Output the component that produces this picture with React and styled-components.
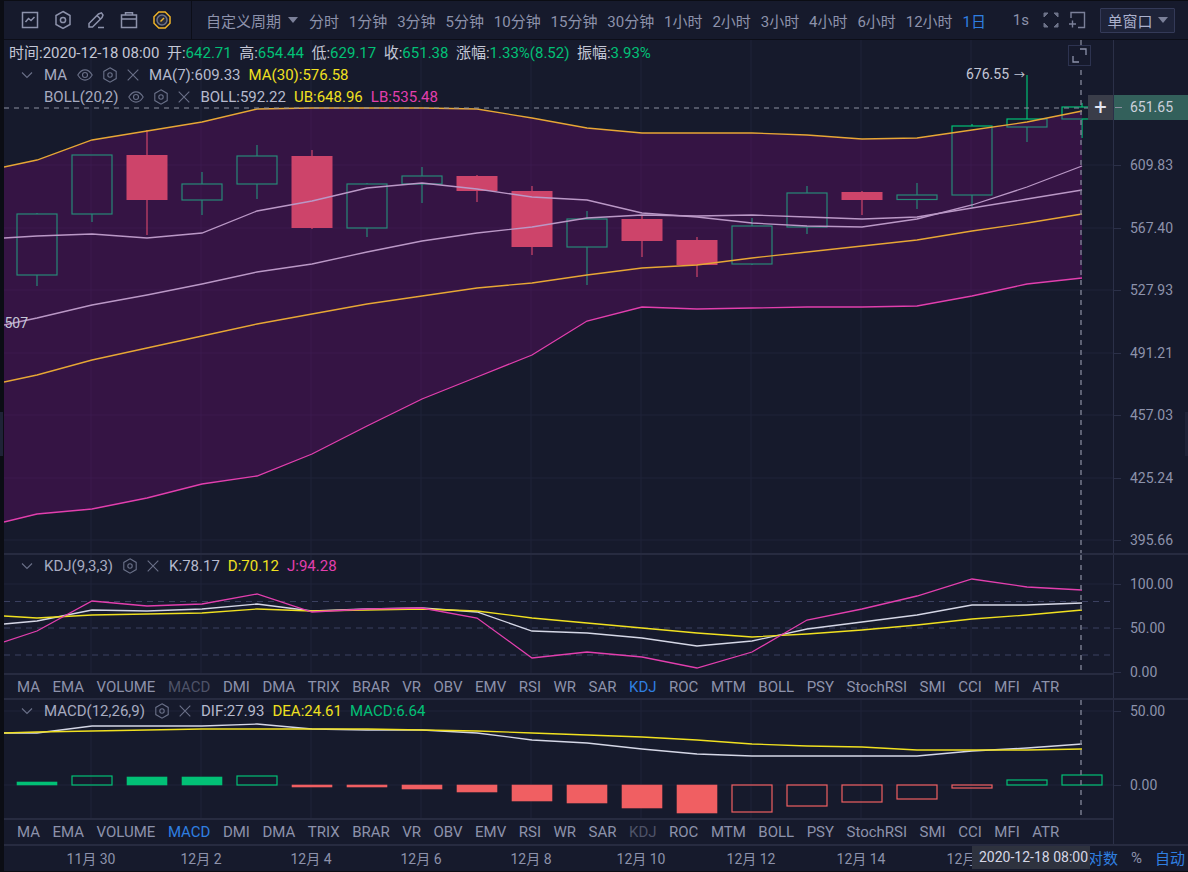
import React from 'react';
import styled, { createGlobalStyle } from 'styled-components';

const periods = ['分时', '1分钟', '3分钟', '5分钟', '10分钟', '15分钟', '30分钟', '1小时', '2小时', '3小时', '4小时', '6小时', '12小时'];
const indicators = ['MA', 'EMA', 'VOLUME', 'MACD', 'DMI', 'DMA', 'TRIX', 'BRAR', 'VR', 'OBV', 'EMV', 'RSI', 'WR', 'SAR', 'KDJ', 'ROC', 'MTM', 'BOLL', 'PSY', 'StochRSI', 'SMI', 'CCI', 'MFI', 'ATR'];
const dates = ['11月 30', '12月 2', '12月 4', '12月 6', '12月 8', '12月 10', '12月 12', '12月 14', '12月 16'];

const GREEN = '#02c076';
const RED = '#f05f62';
const WHITE = '#d5d7e6';
const LABEL = '#b7bace';
const YELLOW = '#f0e020';
const PINK = '#e23fae';
const ORANGE = '#e7a735';
const GRID = '#1f2338';

// candle: [high, top of body, bottom of body, low, up?]
const candles = [
  [213, 214, 275, 286, 1], [155, 155, 214, 222, 1], [130, 155, 200, 235, 0], [172, 184, 200, 215, 1],
  [145, 156, 184, 199, 1], [150, 156, 228, 229, 0], [183, 184, 228, 237, 1], [167, 176, 184, 203, 1],
  [175, 176, 191, 202, 0], [186, 191, 247, 255, 0], [211, 219, 247, 285, 1], [216, 219, 241, 257, 0],
  [237, 240, 265, 277, 0], [218, 226, 264, 265, 1], [186, 193, 227, 234, 1], [191, 192, 200, 215, 0],
  [183, 195, 199.5, 209, 1], [124, 126, 195, 207, 1], [75, 119, 127, 142, 1], [103, 107, 119, 138, 1],
];

const upper = [167, 160, 140, 131, 122, 109, 108, 108, 108, 109, 118, 128, 133, 133, 133, 135, 139, 138, 130, 122, 111];
const lower = [522, 514, 509, 498, 484, 476, 454, 426, 399, 377, 355, 321, 307, 309, 308, 307, 307, 306, 296, 284, 278];
const middle = [382, 375, 360, 348, 336, 324, 314, 304, 296, 288, 283, 275, 268, 265, 258, 252, 246, 240, 231, 223, 214];
const ma7 = [238, 236, 234, 238, 233, 211, 201, 188, 183, 189, 197, 200, 213, 217, 223, 226, 227, 219, 205, 187, 166];
const ma30 = [325, 318, 305, 295, 284, 272, 264, 252, 241, 233, 227, 218, 215, 216, 215, 217, 219, 217, 208, 199, 190];

const kdjK = [624, 621, 610, 611, 609, 604, 611, 609, 608, 612, 631, 633, 638, 646, 641, 629, 622, 615, 605, 605, 603];
const kdjD = [616, 618, 615, 614, 613, 609, 611, 610, 609, 611, 618, 623, 628, 633, 637, 634, 630, 625, 619, 615, 610];
const kdjJ = [642, 631, 601, 606, 604, 594, 612, 609, 608, 618, 658, 652, 657, 668, 652, 620, 609, 596, 579, 587, 590];

const dif = [733, 733, 726, 726, 726, 724, 729, 730, 730, 733, 740, 743, 749, 754, 756, 756, 756, 756, 751, 748, 744];
const dea = [733, 732, 731, 730, 729, 729, 729, 729, 730, 731, 733, 735, 737, 740, 744, 746, 747, 750, 750, 750, 749];

// macd bar: [y, filled?]  zero line sits at 785
const bars = [
  [782, 1], [776, 0], [777, 1], [777, 1], [776, 0], [787, 1], [787, 1], [789, 1], [792, 1], [801, 1],
  [803, 1], [808, 1], [813, 1], [812, 0], [806, 0], [802, 0], [799, 0], [788, 0], [780, 0], [775, 0],
];

const gridX = [91, 201, 311, 421, 531, 641, 751, 861, 971];
const cx = (i) => 37 + 55 * i;
const toPoints = (ys) => ys.map((y, i) => `${i === 0 ? 4 : cx(i - 1)},${y}`).join(' ');

const ChartGrid = ({ rows, top, bottom }) => (
  <g stroke={GRID} strokeWidth="1">
    {gridX.map((x) => <line key={x} x1={x} x2={x} y1={top} y2={bottom} />)}
    {rows.map((y) => <line key={y} x1="4" x2="1113" y1={y} y2={y} />)}
  </g>
);

const Crosshair = ({ top, bottom }) => (
  <line x1="1081" x2="1081" y1={top} y2={bottom} stroke="#7d8193" strokeWidth="1.4" strokeDasharray="5 5" />
);

const Line = ({ ys, color }) => (
  <polyline points={toPoints(ys)} fill="none" stroke={color} strokeWidth="1.3" />
);

const Candle = ({ data, i }) => {
  const [high, top, bottom, low, up] = data;
  const x = cx(i);
  if (up) {
    return (
      <g stroke={GREEN} strokeWidth="1.2" fill="none">
        <line x1={x} x2={x} y1={high} y2={top} />
        <line x1={x} x2={x} y1={bottom} y2={low} />
        <rect x={x - 20} y={top} width="40" height={bottom - top} />
      </g>
    );
  }
  return (
    <g stroke={RED} fill={RED}>
      <line x1={x} x2={x} y1={high} y2={low} strokeWidth="1.2" />
      <rect x={x - 20.5} y={top} width="41" height={bottom - top} stroke="none" />
    </g>
  );
};

const MacdBar = ({ data, i }) => {
  const [y, filled] = data;
  const color = y < 785 ? GREEN : RED;
  const top = Math.min(y, 785);
  const h = Math.abs(785 - y);
  return (
    <rect
      x={cx(i) - 20}
      y={top}
      width="40"
      height={h}
      fill={filled ? color : 'none'}
      stroke={color}
      strokeWidth={filled ? 0.6 : 1.2}
    />
  );
};

const bandPath = () => {
  const top = upper.map((y, i) => `${i === 0 ? 4 : cx(i - 1)},${y}`);
  const low = lower.map((y, i) => `${i === 0 ? 4 : cx(i - 1)},${y}`).reverse();
  return [...top, ...low].join(' ');
};

const ChevronIcon = () => (
  <LegendIcon width="12" height="12" viewBox="0 0 12 12"><path d="M1 3.5 6 8.5 11 3.5" /></LegendIcon>
);
const EyeIcon = () => (
  <LegendIcon width="16" height="12" viewBox="0 0 16 12">
    <path d="M.8 6C3 2.4 5.4.9 8 .9s5 1.5 7.2 5.1c-2.2 3.6-4.6 5.1-7.2 5.1S3 9.6.8 6Z" />
    <circle cx="8" cy="6" r="2.5" />
  </LegendIcon>
);
const HexIcon = () => (
  <LegendIcon width="14" height="16" viewBox="0 0 14 16">
    <path d="M7 .8 13.2 4.4V11.6L7 15.2.8 11.6V4.4Z" />
    <circle cx="7" cy="8" r="2.2" />
  </LegendIcon>
);
const CloseIcon = () => (
  <LegendIcon width="12" height="12" viewBox="0 0 12 12"><path d="M.7.7 11.3 11.3M11.3.7.7 11.3" /></LegendIcon>
);

const Legend = ({ name, eye, values, first }) => (
  <LegendRow>
    {first ? <ChevronIcon /> : <ChevronSpace />}
    <LegendName>{name}</LegendName>
    {eye && <EyeIcon />}
    <HexIcon />
    <CloseIcon />
    <LegendValues>
      {values.map(([text, color]) => <Colored key={text} $color={color}>{text}</Colored>)}
    </LegendValues>
  </LegendRow>
);

const Tabs = ({ active, dim, height }) => (
  <TabRow $height={height}>
    {indicators.map((name) => (
      <Tab key={name} $active={name === active} $dim={name === dim}>{name}</Tab>
    ))}
  </TabRow>
);

const Axis = ({ top, labels }) => (
  <AxisColumn>
    {labels.map(([text, y]) => (
      <AxisItem key={text} $y={y - top}>
        <Tick />
        {text}
      </AxisItem>
    ))}
  </AxisColumn>
);

export default function App() {
  return (
    <Shell>
      <GlobalStyle />
      <Handle $side="left" />
      <Handle $side="right" />
      <Toolbar>
        <ToolIcons>
          <ToolIcon viewBox="0 0 20 20">
            <rect x="2.5" y="2.5" width="15" height="15" />
            <path d="M5.5 12 8.5 8.5 11 10.5 14.5 7" />
          </ToolIcon>
          <ToolIcon viewBox="0 0 20 20">
            <path d="M10 1.5 17 5.5V14.5L10 18.5 3 14.5V5.5Z" />
            <circle cx="10" cy="10" r="2.6" />
          </ToolIcon>
          <ToolIcon viewBox="0 0 20 20">
            <path d="M3 17V13.5L12.5 4 15.5 2.8 17 5 16 7.5 6.5 17Z" />
            <path d="M11 5.5 14.5 9M12 17.5H18" />
          </ToolIcon>
          <ToolIcon viewBox="0 0 20 20">
            <rect x="2.5" y="5" width="15" height="12.5" />
            <path d="M2.5 9H17.5M6.5 5V2.8H13.5V5" />
          </ToolIcon>
          <ToolIcon viewBox="0 0 20 20" $color="#f0b429">
            <path d="M6.8 2H13.2L18 6.8V13.2L13.2 18H6.8L2 13.2V6.8Z" />
            <circle cx="10" cy="10" r="5" stroke="#6d7288" fill="#262a3c" />
            <path d="M8.5 11.5 12 8" />
          </ToolIcon>
        </ToolIcons>
        <Periods>
          <Custom>自定义周期<Caret /></Custom>
          {periods.map((p) => <Period key={p}>{p}</Period>)}
          <Period $active>1日</Period>
          <Seconds>1s</Seconds>
        </Periods>
        <ExpandIcon viewBox="0 0 16 16">
          <path d="M1 5V1H5L1 5ZM15 5V1H11L15 5ZM1 11V15H5L1 11ZM15 11V15H11L15 11Z" />
        </ExpandIcon>
        <WindowIcon viewBox="0 0 18 18">
          <path d="M3 7V1.5H16.5V16.5H10" />
          <path d="M1 13H8M4.5 9.5V16.5" />
        </WindowIcon>
        <WindowButton>单窗口<Caret /></WindowButton>
      </Toolbar>

      <Pane $height={513}>
        <Left>
          <Chart>
            <ChartSvg viewBox="4 40 1109 513">
              <ChartGrid rows={[165, 228, 290, 353, 415, 478, 540]} top={40} bottom={553} />
              {candles.map((c, i) => <Candle key={i} data={c} i={i} />)}
              <Line ys={ma7} color={WHITE} />
              <Line ys={ma30} color={WHITE} />
              <polygon points={bandPath()} fill="rgba(126, 8, 126, 0.3)" />
              <Line ys={upper} color={ORANGE} />
              <Line ys={middle} color={ORANGE} />
              <Line ys={lower} color={PINK} />
              <line x1="4" x2="1113" y1="108" y2="108" stroke="#8b8fa0" strokeWidth="1.2" strokeDasharray="5 5" />
              <Crosshair top={40} bottom={553} />
              <EdgeLabel x="4.5" y="328">507</EdgeLabel>
            </ChartSvg>
            <LegendBlock>
              <InfoRow>
                <span>时间:2020-12-18 08:00</span>
                <span>开:<Colored $color={GREEN}>642.71</Colored></span>
                <span>高:<Colored $color={GREEN}>654.44</Colored></span>
                <span>低:<Colored $color={GREEN}>629.17</Colored></span>
                <span>收:<Colored $color={GREEN}>651.38</Colored></span>
                <span>涨幅:<Colored $color={GREEN}>1.33%(8.52)</Colored></span>
                <span>振幅:<Colored $color={GREEN}>3.93%</Colored></span>
              </InfoRow>
              <Legend first eye name="MA" values={[['MA(7):609.33', LABEL], ['MA(30):576.58', YELLOW]]} />
              <Legend eye name="BOLL(20,2)" values={[['BOLL:592.22', LABEL], ['UB:648.96', YELLOW], ['LB:535.48', PINK]]} />
            </LegendBlock>
            <HighMark>676.55<HighArrow>→</HighArrow></HighMark>
            <MaximizeBox>
              <svg width="15" height="15" viewBox="0 0 15 15" fill="none" stroke="#8d92ab" strokeWidth="1.3">
                <path d="M1 8V14H7M8 1H14V7" />
              </svg>
            </MaximizeBox>
            <CrossButton>+</CrossButton>
          </Chart>
        </Left>
        <AxisColumn>
          {[['609.83', 165], ['567.40', 228], ['527.93', 290], ['491.21', 353], ['457.03', 415], ['425.24', 478], ['395.66', 540]].map(([text, y]) => (
            <AxisItem key={text} $y={y - 40}><Tick />{text}</AxisItem>
          ))}
          <PriceTag>651.65</PriceTag>
        </AxisColumn>
      </Pane>

      <Pane $height={145} $divided>
        <Left>
          <Chart>
            <ChartSvg viewBox="4 555 1109 118">
              <ChartGrid rows={[584]} top={555} bottom={673} />
              {[601.5, 628, 655].map((y) => (
                <line key={y} x1="4" x2="1113" y1={y} y2={y} stroke="#3b4060" strokeWidth="1" strokeDasharray="6 5" />
              ))}
              <Line ys={kdjK} color={WHITE} />
              <Line ys={kdjD} color={YELLOW} />
              <Line ys={kdjJ} color={PINK} />
              <Crosshair top={555} bottom={673} />
            </ChartSvg>
            <LegendBlock>
              <Legend first name="KDJ(9,3,3)" values={[['K:78.17', LABEL], ['D:70.12', YELLOW], ['J:94.28', PINK]]} />
            </LegendBlock>
          </Chart>
          <Tabs active="KDJ" dim="MACD" height={25} />
        </Left>
        <Axis top={555} labels={[['100.00', 584], ['50.00', 628], ['0.00', 672]]} />
      </Pane>

      <Pane $height={146} $divided>
        <Left>
          <Chart>
            <ChartSvg viewBox="4 700 1109 118">
              <ChartGrid rows={[711, 785]} top={700} bottom={818} />
              {bars.map((b, i) => <MacdBar key={i} data={b} i={i} />)}
              <Line ys={dif} color={WHITE} />
              <Line ys={dea} color={YELLOW} />
              <Crosshair top={700} bottom={818} />
            </ChartSvg>
            <LegendBlock>
              <Legend first name="MACD(12,26,9)" values={[['DIF:27.93', LABEL], ['DEA:24.61', YELLOW], ['MACD:6.64', GREEN]]} />
            </LegendBlock>
          </Chart>
          <Tabs active="MACD" dim="KDJ" height={26} />
        </Left>
        <Axis top={700} labels={[['50.00', 711], ['0.00', 785]]} />
      </Pane>

      <TimeAxis>
        <DateRow>
          {dates.map((d) => <DateLabel key={d}>{d}</DateLabel>)}
        </DateRow>
        <ScaleModes>
          <ScaleMode $on>对数</ScaleMode>
          <ScaleMode>%</ScaleMode>
          <ScaleMode $on>自动</ScaleMode>
        </ScaleModes>
        <TimeTag>2020-12-18 08:00</TimeTag>
      </TimeAxis>
    </Shell>
  );
}

const GlobalStyle = createGlobalStyle`
  html, body { margin: 0; padding: 0; background: #0b0d14; overflow: hidden; }
  * { box-sizing: border-box; }
  #root { width: 1188px; height: 872px; }
`;

const Shell = styled.div`
  position: relative;
  width: 1188px;
  height: 872px;
  padding: 1px 0 1px 4px;
  background: #0b0d14;
  color: #c4c7d6;
  font-family: Roboto, "Noto Sans CJK SC", sans-serif;
  font-size: 15px;
`;

const Handle = styled.div`
  position: absolute;
  top: 412px;
  ${(p) => p.$side}: 0;
  width: 3px;
  height: 44px;
  background: #1f2337;
  z-index: 5;
`;

const Toolbar = styled.div`
  display: flex;
  align-items: center;
  height: 39px;
  background: #161a2c;
  border-bottom: 1px solid #0c0e18;
`;

const ToolIcons = styled.div`
  display: flex;
  align-items: center;
  gap: 13px;
  height: 100%;
  padding: 0 19px 0 16px;
  border-right: 1px solid #0c0e18;
`;

const ToolIcon = styled.svg`
  width: 20px;
  height: 20px;
  fill: none;
  stroke: ${(p) => p.$color || '#8d92ab'};
  stroke-width: 1.5;
`;

const Periods = styled.div`
  display: flex;
  align-items: center;
  gap: 9.9px;
  padding-left: 14px;
  color: #8d92ab;
`;

const Custom = styled.span`
  display: flex;
  align-items: center;
  gap: 7px;
  margin-right: 1px;
`;

const Caret = styled.i`
  width: 0;
  height: 0;
  border-left: 5px solid transparent;
  border-right: 5px solid transparent;
  border-top: 6px solid #7b8099;
`;

const Period = styled.span`
  color: ${(p) => (p.$active ? '#2f7fe0' : '#8d92ab')};
`;

const Seconds = styled.span`
  margin-left: 17px;
`;

const ExpandIcon = styled.svg`
  width: 16px;
  height: 16px;
  margin-left: 14px;
  fill: #6d7288;
  stroke: #6d7288;
  stroke-width: 1;
`;

const WindowIcon = styled.svg`
  width: 18px;
  height: 18px;
  margin-left: 9px;
  fill: none;
  stroke: #7b8099;
  stroke-width: 1.4;
`;

const WindowButton = styled.button`
  display: flex;
  align-items: center;
  justify-content: center;
  gap: 5px;
  width: 75px;
  height: 25px;
  margin-left: 14px;
  padding: 0;
  background: #1e2339;
  border: 1px solid #343a58;
  border-radius: 1px;
  color: #aab0cc;
  font: inherit;
`;

const Pane = styled.div`
  display: grid;
  grid-template-columns: 1109px 75px;
  height: ${(p) => p.$height}px;
  background: #161a2c;
  border-top: ${(p) => (p.$divided ? '2px solid #272b40' : 'none')};
`;

const Left = styled.div`
  display: flex;
  flex-direction: column;
  min-height: 0;
`;

const Chart = styled.div`
  position: relative;
  flex: 1;
  min-height: 0;
  overflow: hidden;
`;

const ChartSvg = styled.svg`
  display: block;
  width: 100%;
  height: 100%;
`;

const EdgeLabel = styled.text`
  fill: #c4c7d6;
  font-size: 14px;
`;

const LegendBlock = styled.div`
  position: absolute;
  top: 0;
  left: 0;
  white-space: nowrap;
`;

const InfoRow = styled.div`
  display: flex;
  align-items: center;
  gap: 7.5px;
  height: 22px;
  margin-bottom: 2px;
  padding-left: 5px;
`;

const LegendRow = styled.div`
  display: flex;
  align-items: center;
  gap: 10px;
  height: 22px;
  padding-left: 17px;
  color: #a7abc0;
`;

const ChevronSpace = styled.span`
  width: 12px;
  height: 12px;
`;

const LegendIcon = styled.svg`
  flex: none;
  fill: none;
  stroke: #6a7088;
  stroke-width: 1.1;
`;

const LegendName = styled.span`
  margin-left: 1px;
`;

const LegendValues = styled.span`
  display: flex;
  gap: 8px;
`;

const Colored = styled.span`
  color: ${(p) => p.$color};
`;

const HighMark = styled.span`
  position: absolute;
  top: 26px;
  left: 962px;
  font-size: 14px;
  white-space: nowrap;
`;

const HighArrow = styled.span`
  margin-left: 5px;
  font-size: 11px;
`;

const MaximizeBox = styled.div`
  position: absolute;
  top: 5px;
  right: 22px;
  display: flex;
  align-items: center;
  justify-content: center;
  width: 23px;
  height: 21px;
  background: #161a2c;
  border: 1px solid #2d3350;
`;

const CrossButton = styled.div`
  position: absolute;
  top: 55px;
  right: 0;
  display: flex;
  align-items: center;
  justify-content: center;
  width: 25px;
  height: 25px;
  background: #3a3d49;
  color: #e4e6f0;
  font-size: 22px;
`;

const TabRow = styled.div`
  display: flex;
  align-items: center;
  gap: 12.5px;
  flex: none;
  height: ${(p) => p.$height}px;
  padding-left: 13px;
  border-top: 2px solid #272b40;
`;

const Tab = styled.span`
  color: ${(p) => (p.$active ? '#2f7fe0' : p.$dim ? '#4e5368' : '#8d92ab')};
`;

const AxisColumn = styled.div`
  position: relative;
  border-left: 1px solid #2b3048;
`;

const AxisItem = styled.div`
  position: absolute;
  top: ${(p) => p.$y - 10}px;
  left: 0;
  display: flex;
  align-items: center;
  gap: 9px;
  height: 20px;
  color: #8d92ab;
  font-size: 14px;
`;

const Tick = styled.i`
  width: 7px;
  height: 1px;
  background: #2b3048;
`;

const PriceTag = styled.div`
  position: absolute;
  top: 55px;
  left: 0;
  right: 0;
  height: 25px;
  padding-left: 16px;
  background: #33605b;
  color: #ccd0dc;
  font-size: 14px;
  line-height: 25px;

  &::before {
    content: '';
    position: absolute;
    top: 12px;
    left: 1px;
    width: 7px;
    height: 1px;
    background: #8b8fa0;
  }
`;

const TimeAxis = styled.div`
  position: relative;
  display: flex;
  align-items: center;
  justify-content: space-between;
  height: 27px;
  padding-bottom: 2px;
  background: #161a2c;
  border-top: 2px solid #272b40;
`;

const DateRow = styled.div`
  display: grid;
  grid-template-columns: repeat(9, 110px);
  padding-left: 32px;
`;

const DateLabel = styled.span`
  color: #8d92ab;
  text-align: center;
  font-size: 14px;
`;

const ScaleModes = styled.div`
  display: flex;
  align-items: center;
  gap: 13px;
  padding-right: 3px;
`;

const ScaleMode = styled.span`
  color: ${(p) => (p.$on ? '#2f7fe0' : '#8d92ab')};
`;

const TimeTag = styled.div`
  position: absolute;
  top: 0;
  left: 968px;
  width: 118px;
  height: 23px;
  padding-left: 5px;
  background: #2e323e;
  color: #d5d7e6;
  font-size: 14px;
  line-height: 23px;
  text-align: center;
  white-space: nowrap;
`;
